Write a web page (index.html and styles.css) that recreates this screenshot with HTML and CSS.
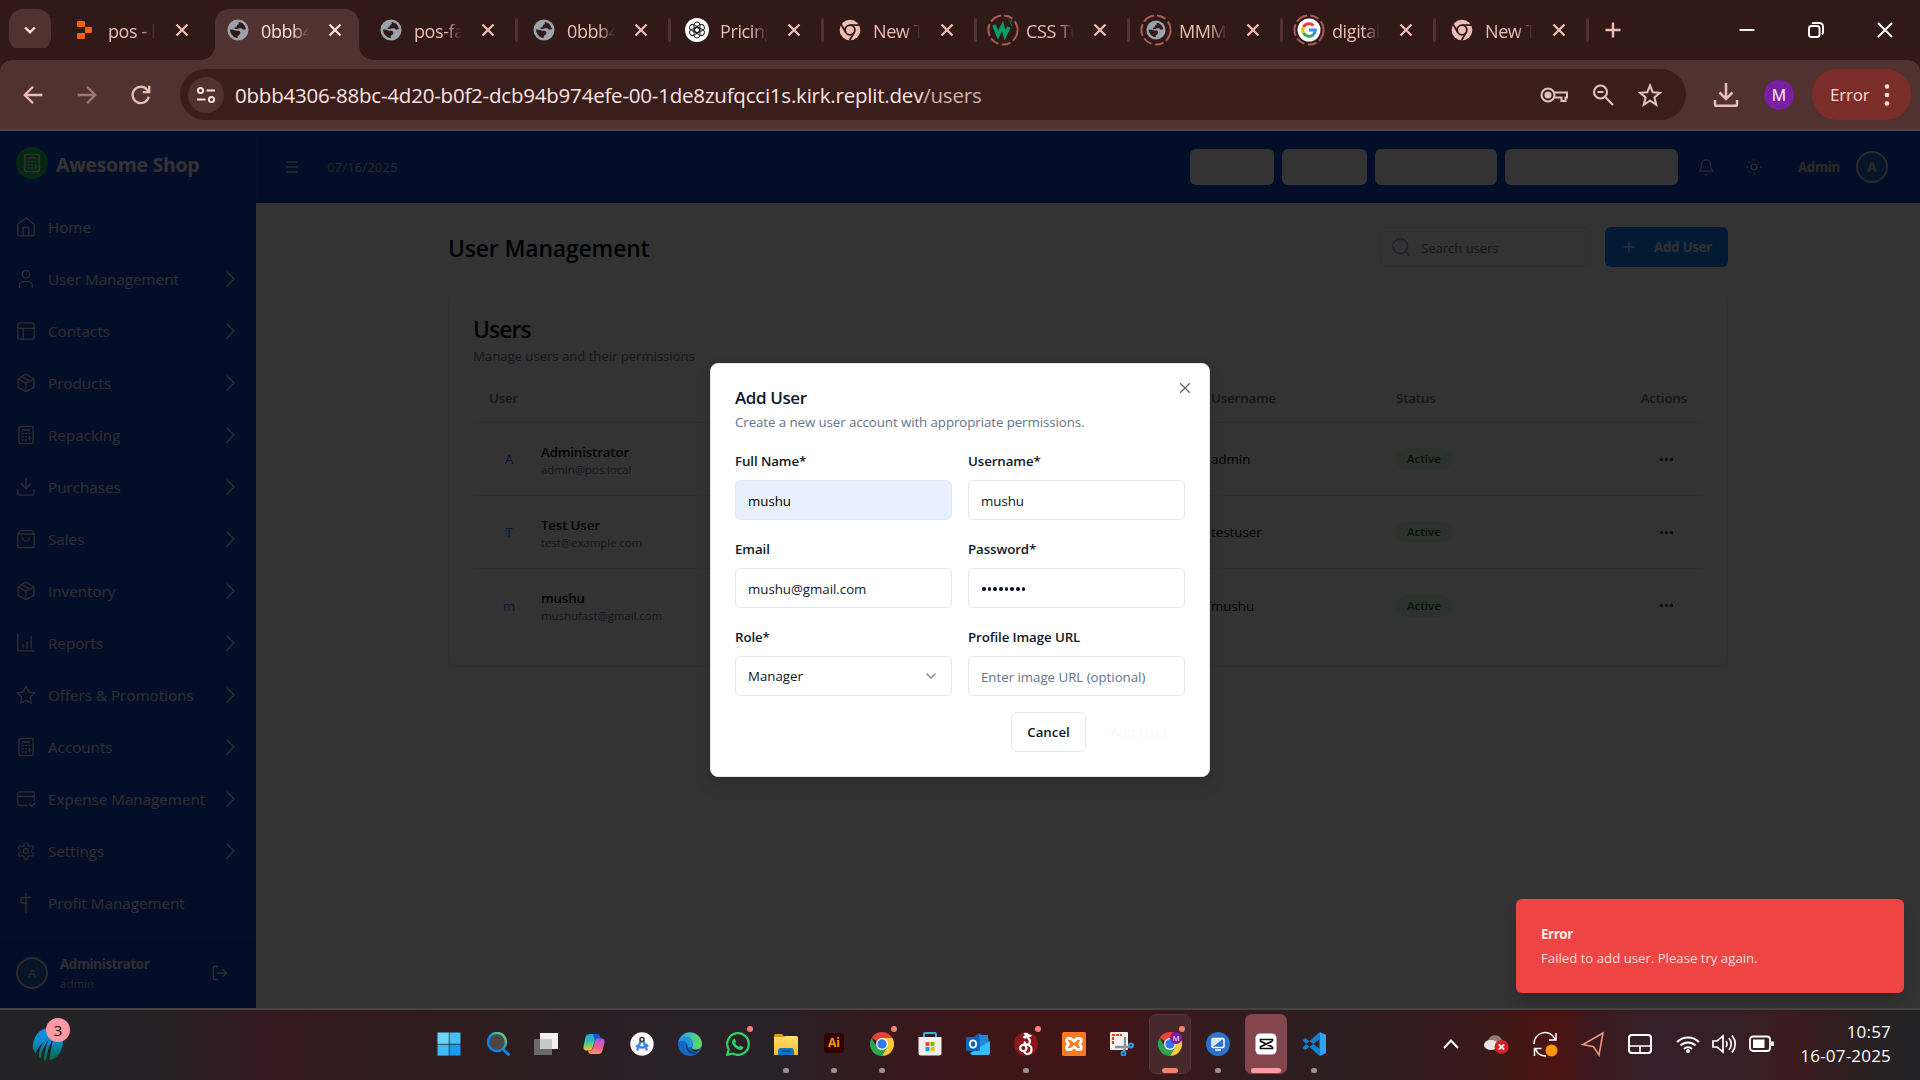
FILE: index.html
```html
<!DOCTYPE html>
<html lang="en">
<head>
<meta charset="utf-8">
<title>Awesome Shop - Users</title>
<link rel="stylesheet" href="styles.css">
</head>
<body>
<svg class="sprite" aria-hidden="true">
  <defs>
    <linearGradient id="gSearch" x1="0" y1="1" x2="1" y2="0"><stop offset="0.4" stop-color="#1180dd"/><stop offset="1" stop-color="#6fe06a"/></linearGradient>
    <linearGradient id="gEdge" x1="0" y1="0" x2="1" y2="0"><stop offset="0" stop-color="#2aa8e8"/><stop offset="1" stop-color="#62dd58"/></linearGradient>
    <linearGradient id="gCopA" x1="0" y1="0" x2="0" y2="1"><stop offset="0" stop-color="#1c9be8"/><stop offset="0.5" stop-color="#3fc4a0"/><stop offset="1" stop-color="#f6c817"/></linearGradient>
    <linearGradient id="gCopB" x1="0" y1="0" x2="0" y2="1"><stop offset="0" stop-color="#a65cf0"/><stop offset="0.55" stop-color="#f0569a"/><stop offset="1" stop-color="#ff9a55"/></linearGradient>
    <linearGradient id="gGlobe" x1="0" y1="0" x2="0" y2="1"><stop offset="0" stop-color="#1593e6"/><stop offset="0.45" stop-color="#0c86c8"/><stop offset="1" stop-color="#036b2e"/></linearGradient>
    <linearGradient id="gFolder" x1="0" y1="0" x2="0" y2="1"><stop offset="0" stop-color="#ffdf73"/><stop offset="1" stop-color="#fbbc25"/></linearGradient>
  </defs>
  <symbol id="close" viewBox="0 0 16 16"><path d="M2.500 2.500l11 11M13.500 2.500l-11 11"/></symbol>
  <symbol id="world" viewBox="0 0 24 24"><circle cx="12" cy="12" r="11.500" fill="#9aa3ab"/><path d="M12.500 3.300C17 3.500 20 7 20.700 11l-3 .8-2-1.800h-3l-1.500 1H8.500L8 9.500l2.500-1L11 6.500l2-1zM3.300 11.500l3.500.3 3.200.9h3.200l1.500 1.800-.5 2-2.500 2v2.200C7 20.500 3.500 16.500 3.300 11.500z" fill="#33191a"/></symbol>
  <symbol id="chromeMono" viewBox="0 0 24 24"><circle cx="12" cy="12" r="11.300" fill="#edbdb5"/><g fill="none" stroke="#311917" stroke-width="2"><circle cx="12" cy="12" r="5.300"/><path d="M12 6.700h10.500M7.400 14.600L2.300 5.900M16.600 14.600L11.500 23.300"/></g></symbol>
  <symbol id="chromeColor" viewBox="0 0 24 24"><path d="M12 12L1.600 6A12 12 0 0 1 22.400 6z" fill="#ea4335"/><path d="M12 6h10.400A12 12 0 0 1 12 24l5.200-9z" fill="#fcc934"/><path d="M6.800 15L1.600 6A12 12 0 0 0 12 24l5.200-9z" fill="#30a350"/><circle cx="12" cy="12" r="6" fill="#fff"/><circle cx="12" cy="12" r="4.700" fill="#2e79ee"/></symbol>
  <symbol id="spin" viewBox="0 0 32 32"><circle cx="16" cy="16" r="14.600" fill="none" stroke="#a85d56" stroke-width="2" stroke-dasharray="12 3 9 3.500 9 3 12 3"/></symbol>
  <symbol id="chev" viewBox="0 0 20 20"><path d="M7 3l7 7-7 7"/></symbol>
  <symbol id="home" viewBox="0 0 20 20"><path d="M1.800 7.200L10 1l8.200 6.200V17a1.800 1.800 0 0 1-1.800 1.800H3.600A1.800 1.800 0 0 1 1.800 17zM7.200 18.800V10.500h5.600v8.300"/></symbol>
  <symbol id="user" viewBox="0 0 20 20"><circle cx="10" cy="5.200" r="3.700"/><path d="M3.500 18.500v-1.800a4 4 0 0 1 4-4h5a4 4 0 0 1 4 4v1.800"/></symbol>
  <symbol id="layout" viewBox="0 0 20 20"><rect x="1.800" y="1.800" width="16.400" height="16.400" rx="1.800"/><path d="M1.800 7.300h16.400M7.300 18.200V7.300"/></symbol>
  <symbol id="box" viewBox="0 0 20 20"><path d="M10 1.300l7.900 4.400v8.700L10 18.800l-7.900-4.400V5.700zM2.300 5.900L10 10.200l7.700-4.300M10 10.200v8.500M6 3.600l7.800 4.500"/></symbol>
  <symbol id="calc" viewBox="0 0 20 20"><rect x="2.900" y="1.300" width="14.200" height="17.400" rx="1.800"/><path d="M6.500 5h7M13.500 11.500v3.500M6.300 8.500h.8M9.600 8.500h.8M13 8.500h.8M6.300 11.700h.8M9.600 11.700h.8M6.300 15h.8M9.600 15h.8"/></symbol>
  <symbol id="down" viewBox="0 0 20 20"><path d="M18.200 12.500v3.800a1.800 1.800 0 0 1-1.800 1.800H3.600a1.800 1.800 0 0 1-1.800-1.800v-3.800M5.500 7l4.500 4.500L14.500 7M10 11V1.300"/></symbol>
  <symbol id="bag" viewBox="0 0 20 20"><path d="M4.300 1.300L1.800 4.700v12.200a1.800 1.800 0 0 0 1.800 1.800h12.800a1.800 1.800 0 0 0 1.800-1.800V4.700l-2.500-3.400zM1.800 5h16.400M13.600 8.600a3.600 3.600 0 0 1-7.200 0"/></symbol>
  <symbol id="chart" viewBox="0 0 20 20"><path d="M1.800 1.500v16.300h16.700M7 15v-3.500M11 15V8.500M15.200 15V3.500"/></symbol>
  <symbol id="star" viewBox="0 0 20 20"><path d="M10 1.300l2.700 5.600 6.100.9-4.400 4.300 1 6.200L10 15.400l-5.400 2.900 1-6.200L1.200 7.800l6.100-.9z"/></symbol>
  <symbol id="card" viewBox="0 0 20 20"><path d="M11 16.500H3.400a1.600 1.600 0 0 1-1.600-1.600V4.500a1.600 1.600 0 0 1 1.600-1.600h13.200a1.600 1.600 0 0 1 1.600 1.600V11M1.800 7.500h16.400M13.500 15.500l2 2 3.500-3.500"/></symbol>
  <symbol id="gear" viewBox="0 0 24 24"><path d="M12.220 2h-.440a2 2 0 0 0-2 2v.180a2 2 0 0 1-1 1.730l-.430.250a2 2 0 0 1-2 0l-.150-.080a2 2 0 0 0-2.730.730l-.220.380a2 2 0 0 0 .730 2.730l.150.100a2 2 0 0 1 1 1.720v.510a2 2 0 0 1-1 1.740l-.150.090a2 2 0 0 0-.730 2.730l.220.380a2 2 0 0 0 2.730.730l.150-.080a2 2 0 0 1 2 0l.430.250a2 2 0 0 1 1 1.730V20a2 2 0 0 0 2 2h.440a2 2 0 0 0 2-2v-.180a2 2 0 0 1 1-1.730l.430-.250a2 2 0 0 1 2 0l.150.080a2 2 0 0 0 2.730-.730l.220-.390a2 2 0 0 0-.730-2.730l-.150-.080a2 2 0 0 1-1-1.740v-.500a2 2 0 0 1 1-1.740l.150-.090a2 2 0 0 0 .730-2.730l-.220-.380a2 2 0 0 0-2.730-.730l-.150.080a2 2 0 0 1-2 0l-.430-.250a2 2 0 0 1-1-1.730V4a2 2 0 0 0-2-2z"/><circle cx="12" cy="12" r="3"/></symbol>
  <symbol id="profit" viewBox="0 0 20 20"><path d="M10 .5v19M14.500 4.500H7.500a2.800 2.800 0 0 0 0 5.600h3.500"/></symbol>
  <symbol id="logout" viewBox="0 0 16 16"><path d="M5.500 14.500h-3a1.200 1.200 0 0 1-1.200-1.200V2.700a1.200 1.200 0 0 1 1.200-1.200h3M5.500 8h9M11 4.500L14.600 8 11 11.500"/></symbol>
  <symbol id="bell" viewBox="0 0 20 20"><path d="M15 7A5 5 0 0 0 5 7c0 5-2.200 7.500-2.200 7.500h14.400S15 12 15 7M8.500 18a1.700 1.700 0 0 0 3 0"/></symbol>
  <symbol id="sun" viewBox="0 0 20 20"><circle cx="10" cy="10" r="3.300"/><path d="M10 1.500v1.800M10 16.700v1.800M4 4l1.300 1.300M14.700 14.700L16 16M1.500 10h1.800M16.700 10h1.800M4 16l1.300-1.300M14.700 5.300L16 4"/></symbol>
  <symbol id="search" viewBox="0 0 20 20"><circle cx="9.200" cy="9.200" r="7.400"/><path d="M14.500 14.500l4 4"/></symbol>
</svg>

<header class="tabstrip">
  <button class="tab-search"><svg viewBox="0 0 16 16" width="16" height="16"><path d="M3.200 5.500L8 10.300l4.800-4.800"/></svg></button>
  <nav class="tabs">
    <div class="tab"><span class="fav"><svg width="24" height="24" viewBox="0 0 24 24" fill="#f8610c"><rect x="4" y="3" width="8" height="6" rx="1"/><rect x="12" y="9" width="7" height="6" rx="1"/><rect x="4" y="15" width="8" height="6" rx="1"/></svg></span><span class="title">pos - l</span><svg class="x"><use href="#close"/></svg></div>
    <div class="tab active"><span class="fav"><svg width="22" height="22"><use href="#world"/></svg></span><span class="title">0bbb4</span><svg class="x"><use href="#close"/></svg></div>
    <div class="tab"><span class="fav"><svg width="22" height="22"><use href="#world"/></svg></span><span class="title">pos-fa</span><svg class="x"><use href="#close"/></svg></div>
    <div class="tab sep"><span class="fav"><svg width="22" height="22"><use href="#world"/></svg></span><span class="title">0bbb4</span><svg class="x"><use href="#close"/></svg></div>
    <div class="tab sep"><span class="fav"><svg width="24" height="24" viewBox="0 0 24 24"><circle cx="12" cy="12" r="12" fill="#fff"/><g fill="none" stroke="#222" stroke-width="1"><rect x="9" y="4" width="6" height="10.500" rx="3"/><rect x="9" y="4" width="6" height="10.500" rx="3" transform="rotate(60 12 12)"/><rect x="9" y="4" width="6" height="10.500" rx="3" transform="rotate(120 12 12)"/><rect x="9" y="4" width="6" height="10.500" rx="3" transform="rotate(180 12 12)"/><rect x="9" y="4" width="6" height="10.500" rx="3" transform="rotate(240 12 12)"/><rect x="9" y="4" width="6" height="10.500" rx="3" transform="rotate(300 12 12)"/></g></svg></span><span class="title">Pricing</span><svg class="x"><use href="#close"/></svg></div>
    <div class="tab sep"><span class="fav"><svg width="22" height="22"><use href="#chromeMono"/></svg></span><span class="title">New T</span><svg class="x"><use href="#close"/></svg></div>
    <div class="tab sep"><span class="fav"><svg class="ring"><use href="#spin"/></svg><svg width="22" height="22" viewBox="0 0 22 22"><path d="M2 6l4 10 4.500-9 2.500 9 4-8" fill="none" stroke="#0a9c63" stroke-width="3.800"/><path d="M17 2h3l-2 2.500q2 0 1.500 2.500" fill="none" stroke="#0a7c50" stroke-width="1"/></svg></span><span class="title">CSS Tu</span><svg class="x"><use href="#close"/></svg></div>
    <div class="tab sep"><span class="fav"><svg class="ring"><use href="#spin"/></svg><svg width="20" height="20"><use href="#world"/></svg></span><span class="title">MMM</span><svg class="x"><use href="#close"/></svg></div>
    <div class="tab sep"><span class="fav"><svg class="ring"><use href="#spin"/></svg><svg width="24" height="24" viewBox="0 0 24 24"><circle cx="12" cy="12" r="11.500" fill="#fff"/><g fill="none" stroke-width="3"><path d="M16.500 7.500A6.300 6.300 0 0 0 6.500 9" stroke="#ea4335"/><path d="M6.500 9a6.500 6.500 0 0 0 0 6" stroke="#fbbc05"/><path d="M6.500 15a6.300 6.300 0 0 0 9.700 1.800" stroke="#34a853"/><path d="M16.200 16.800A6.300 6.300 0 0 0 18.300 12H12" stroke="#4285f4"/></g></svg></span><span class="title">digital</span><svg class="x"><use href="#close"/></svg></div>
    <div class="tab sep"><span class="fav"><svg width="22" height="22"><use href="#chromeMono"/></svg></span><span class="title">New T</span><svg class="x"><use href="#close"/></svg></div>
    <button class="newtab"><svg width="18" height="18" viewBox="0 0 18 18"><path d="M9 1.500v15M1.500 9h15"/></svg></button>
  </nav>
  <div class="wincontrols">
    <svg width="18" height="18" viewBox="0 0 18 18"><path d="M1.500 9h15"/></svg>
    <svg width="18" height="18" viewBox="0 0 18 18"><rect x="2" y="5" width="10.500" height="11" rx="2.500"/><path d="M5 2.600q.5-.6 2-.6h5.500A3.500 3.500 0 0 1 16 5.500V11q0 1.700-1 2.400"/></svg>
    <svg width="18" height="18" viewBox="0 0 18 18"><path d="M2 2l14 14M16 2L2 16"/></svg>
  </div>
</header>

<div class="toolbar">
  <div class="nav">
    <svg viewBox="0 0 20 20"><path d="M18.500 10H2.500M10 2.500L2.500 10l7.500 7.500"/></svg>
    <svg class="dim" viewBox="0 0 20 20"><path d="M1.500 10h16M10 2.500l7.500 7.500-7.500 7.500"/></svg>
    <svg viewBox="0 0 20 20"><path d="M17 11.500A7.400 7.400 0 1 1 15.300 5L17.500 7.200M17.500 1.500v5.900h-5.900"/></svg>
  </div>
  <div class="omnibox">
    <span class="site"><svg width="20" height="20" viewBox="0 0 20 20"><circle cx="4.500" cy="5.500" r="2.600"/><path d="M10.500 5.500H19M1 14.500h8.500"/><circle cx="15.500" cy="14.500" r="2.600"/></svg></span>
    <span class="url">0bbb4306-88bc-4d20-b0f2-dcb94b974efe-00-1de8zufqcci1s.kirk.replit.dev<span>/users</span></span>
    <div class="omni-actions">
      <svg width="28" height="20" viewBox="0 0 28 20"><circle cx="8" cy="10" r="6.500"/><circle cx="8" cy="10" r="2.500" fill="#dcc3be"/><path d="M14.200 7.500H27v5h-1.500v3.500h-4v-3.500h-7"/></svg>
      <svg width="22" height="24" viewBox="0 0 22 24"><circle cx="8.500" cy="9" r="6.500"/><path d="M13.200 14L21 22M5.500 9h6"/></svg>
      <svg width="24" height="24" viewBox="0 0 24 24"><path d="M12 2.500l2.700 6.800 7.300.5-5.600 4.700 1.800 7.200-6.200-4-6.200 4 1.800-7.200L2 9.800l7.300-.5z"/></svg>
    </div>
  </div>
  <svg class="dl" width="26" height="26" viewBox="0 0 26 26"><path d="M13 1v15M6.500 10.500L13 17l6.500-6.500M2 18v4.200a1.600 1.600 0 0 0 1.600 1.600h18.800a1.600 1.600 0 0 0 1.600-1.600V18"/></svg>
  <span class="profile">M</span>
  <button class="error-pill"><span>Error</span><svg width="6" height="24" viewBox="0 0 6 24"><circle cx="3" cy="3.500" r="2.300"/><circle cx="3" cy="12" r="2.300"/><circle cx="3" cy="20.500" r="2.300"/></svg></button>
</div>

<div class="app">
  <aside class="sidebar">
    <div class="brand"><span class="logo"><svg width="20" height="20"><use href="#calc"/></svg></span><b>Awesome Shop</b></div>
    <ul class="menu">
      <li><svg><use href="#home"/></svg><span>Home</span></li>
      <li><svg><use href="#user"/></svg><span>User Management</span><svg class="go"><use href="#chev"/></svg></li>
      <li><svg><use href="#layout"/></svg><span>Contacts</span><svg class="go"><use href="#chev"/></svg></li>
      <li><svg><use href="#box"/></svg><span>Products</span><svg class="go"><use href="#chev"/></svg></li>
      <li><svg><use href="#calc"/></svg><span>Repacking</span><svg class="go"><use href="#chev"/></svg></li>
      <li><svg><use href="#down"/></svg><span>Purchases</span><svg class="go"><use href="#chev"/></svg></li>
      <li><svg><use href="#bag"/></svg><span>Sales</span><svg class="go"><use href="#chev"/></svg></li>
      <li><svg><use href="#box"/></svg><span>Inventory</span><svg class="go"><use href="#chev"/></svg></li>
      <li><svg><use href="#chart"/></svg><span>Reports</span><svg class="go"><use href="#chev"/></svg></li>
      <li><svg><use href="#star"/></svg><span>Offers &amp; Promotions</span><svg class="go"><use href="#chev"/></svg></li>
      <li><svg><use href="#calc"/></svg><span>Accounts</span><svg class="go"><use href="#chev"/></svg></li>
      <li><svg><use href="#card"/></svg><span>Expense Management</span><svg class="go"><use href="#chev"/></svg></li>
      <li><svg><use href="#gear"/></svg><span>Settings</span><svg class="go"><use href="#chev"/></svg></li>
      <li><svg><use href="#profit"/></svg><span>Profit Management</span></li>
    </ul>
    <div class="account"><span class="avatar">A</span><div class="who"><b>Administrator</b><small>admin</small></div><svg width="16" height="16"><use href="#logout"/></svg></div>
  </aside>

  <div class="topbar">
    <svg class="burger" width="14" height="14" viewBox="0 0 14 14"><path d="M1 2h12M1 7h12M1 12h12"/></svg>
    <span class="date">07/16/2025</span>
    <div class="quick"><i class="q1"></i><i class="q2"></i><i class="q3"></i><i class="q4"></i></div>
    <svg class="bell" width="18" height="18"><use href="#bell"/></svg>
    <svg class="sun" width="18" height="18"><use href="#sun"/></svg>
    <b class="role">Admin</b>
    <span class="avatar bold">A</span>
  </div>

  <main class="content">
    <div class="page-head">
      <h1>User Management</h1>
      <div class="searchbox"><svg width="20" height="20"><use href="#search"/></svg><span>Search users</span></div>
      <button class="primary"><svg width="14" height="14" viewBox="0 0 14 14"><path d="M7 1.500v11M1.500 7h11"/></svg><span>Add User</span></button>
    </div>
    <section class="card">
      <h2>Users</h2>
      <p>Manage users and their permissions</p>
      <div class="row head"><span>User</span><span>Username</span><span>Status</span><span class="right">Actions</span></div>
      <div class="row"><div class="person"><i>A</i><div><b>Administrator</b><small>admin@pos.local</small></div></div><span>admin</span><span><em>Active</em></span><span class="dots"><u></u><u></u><u></u></span></div>
      <div class="row"><div class="person"><i>T</i><div><b>Test User</b><small>test@example.com</small></div></div><span>testuser</span><span><em>Active</em></span><span class="dots"><u></u><u></u><u></u></span></div>
      <div class="row"><div class="person"><i>m</i><div><b>mushu</b><small>mushufast@gmail.com</small></div></div><span>mushu</span><span><em>Active</em></span><span class="dots"><u></u><u></u><u></u></span></div>
    </section>
  </main>

  <div class="overlay"></div>

  <div class="dialog">
    <svg class="dismiss"><use href="#close"/></svg>
    <h3>Add User</h3>
    <p>Create a new user account with appropriate permissions.</p>
    <div class="form">
      <div class="field"><label>Full Name*</label><div class="input filled">mushu</div></div>
      <div class="field"><label>Username*</label><div class="input">mushu</div></div>
      <div class="field"><label>Email</label><div class="input">mushu@gmail.com</div></div>
      <div class="field"><label>Password*</label><div class="input password"><u></u><u></u><u></u><u></u><u></u><u></u><u></u><u></u></div></div>
      <div class="field"><label>Role*</label><div class="input select"><span>Manager</span><svg width="12" height="12" viewBox="0 0 12 12"><path d="M1.500 3.500L6 8l4.500-4.500"/></svg></div></div>
      <div class="field"><label>Profile Image URL</label><div class="input placeholder">Enter image URL (optional)</div></div>
    </div>
    <div class="buttons"><button class="cancel">Cancel</button><button class="submit">Add User</button></div>
  </div>

  <div class="toast"><b>Error</b><span>Failed to add user. Please try again.</span></div>
</div>

<footer class="taskbar">
  <div class="widget">
    <svg width="34" height="36" viewBox="0 0 34 36"><path d="M2 22C1 10 9 1 18 1c8 0 14 6 14 14 0 9-5 15-12 18q-2 1-1.500-2L22 12q-5 8-6 16-.5 5-2 6-1.500 0-1-4 1-9 4.500-17-5 6-7 14 0 6-1.500 4-2.500-3 .5-10 1-3 3-6-5 4-7 9-1 4-2 1z" fill="url(#gGlobe)"/></svg>
    <span class="count">3</span>
  </div>
  <div class="apps">
    <div class="appicon start"><svg viewBox="0 0 24 24"><rect x=".5" y=".5" width="11.300" height="11.300" fill="#6fd6fb"/><rect x="12.500" y=".5" width="11" height="11.300" fill="#45bff6"/><rect x=".5" y="12.600" width="11.300" height="11" fill="#3fb9f8"/><rect x="12.500" y="12.600" width="11" height="11" fill="#1b9bf0"/></svg></div>
    <div class="appicon"><svg viewBox="0 0 24 24" fill="none"><path d="M17.500 17.500L22.500 22.500" stroke="#157fd8" stroke-width="3" stroke-linecap="round"/><circle cx="11" cy="10" r="9" fill="#4c4644" stroke="url(#gSearch)" stroke-width="2.500"/></svg></div>
    <div class="appicon"><svg viewBox="0 0 24 24"><rect x="6" y="1" width="18" height="16" fill="#f1f1f1"/><rect x="0" y="7" width="18" height="16" fill="#6a6a6a"/><rect x="6" y="7" width="12" height="10" fill="#c8c8c8"/></svg></div>
    <div class="appicon"><svg viewBox="0 0 24 24"><path d="M7.500 2H15q2 0 2.700 2l.8 2.500h-3q-2 0-2.700 2.500L10.500 16q-.7 2.500-3 2.500H4q-3-.5-2.500-4L3.500 5Q4.500 2 7.500 2z" fill="url(#gCopA)"/><path d="M11 2h4q2 0 2.700 2l.8 2.500h-3q-2 0-2.700 2.500z" fill="#1e52d8"/><path d="M16.500 22H9q-2 0-2.600-2l-.5-1.500h2q2.300 0 3-2.500L13 9q.7-2.500 3-2.500h4q3 .5 2.500 4l-2 8q-1 3.500-4 3.500z" fill="url(#gCopB)"/></svg></div>
    <div class="appicon"><svg viewBox="0 0 24 24"><circle cx="12" cy="12" r="11.700" fill="#fafafa"/><path d="M15.500 11l3 2-3 2.500z" fill="#35a853"/><path d="M11.500 7L7 18.500M12.500 7L17 18.500M6 13.500q6 4 12 0" fill="none" stroke="#4183f2" stroke-width="2.300"/><circle cx="12" cy="7.500" r="2" fill="#fff" stroke="#333" stroke-width="1.500"/></svg></div>
    <div class="appicon"><svg viewBox="0 0 24 24"><circle cx="12" cy="12" r="12" fill="#1668be"/><path d="M.3 10A12 12 0 0 1 24 11.500c0 4-3 6-6 6s-4.500-1-4-2.300c2-2 1-6.700-4-7.200-4-.3-8 .7-9.700 2z" fill="url(#gEdge)"/><path d="M.2 9.600C2 3 14 2 15 11c0 2-1.500 3-1 4.200H10q-1-5-4-6.500-3-.8-5.800.9z" fill="#2293db"/><path d="M9 11q-3 6 3 10 4 2.500 8-.5-5 1-9-3-2-3-2-6.500z" fill="#0b3d85"/><path d="M14 15.300q-1 2.700 4.500 2.500 2.500-.3 4-1.800-1.500 3-4 3.800-5 0-5-4.500z" fill="#221f22"/></svg></div>
    <div class="appicon"><svg viewBox="0 0 24 24" fill="none"><path d="M1 23l1.700-5.500A10.800 10.800 0 1 1 6.800 21.500z" stroke="#2bd366" stroke-width="2.200" stroke-linejoin="round"/><path d="M8.500 6.500l1.800 3-1.300 1.500q1.300 2.600 4 3.900l1.500-1.300 3 1.700q-.5 2.600-3 2.600-4.500-.4-7.500-5-2.500-4.500 1.500-6.400z" fill="#2bd366"/></svg><b class="note"></b></div>
    <div class="appicon run"><svg viewBox="0 0 24 24"><path d="M0 4q0-2 2-2h6l2 2.500V10H0z" fill="#dd9b10"/><path d="M0 5h9l2-1h11.500Q24 4 24 5.500V23H0z" fill="url(#gFolder)"/><path d="M4 23v-4q0-3 3-3h10q3 0 3 3v4z" fill="#1274c4"/><path d="M7.500 19h9" stroke="#0a4a86" stroke-width="1.400"/></svg></div>
    <div class="appicon run"><svg viewBox="0 0 24 24"><rect x="2" y="1" width="20" height="20" rx="3.500" fill="#330000"/><text x="12" y="15" text-anchor="middle" font-family="Open Sans, sans-serif" font-weight="700" font-size="12" fill="#ff9a00">Ai</text></svg></div>
    <div class="appicon run"><svg viewBox="0 0 24 24"><use href="#chromeColor"/></svg><b class="note"></b></div>
    <div class="appicon"><svg viewBox="0 0 24 24"><path d="M6 6V2.500Q6 1 7.500 1h9Q18 1 18 2.500V6" fill="none" stroke="#35b4f0" stroke-width="2"/><path d="M.5 5h23v16q0 2.500-2.500 2.500H3Q.5 23.500.5 21z" fill="#f0f0f0"/><path d="M7.500 10h4v4h-4z" fill="#f25022"/><path d="M12.500 10h4v4h-4z" fill="#7fba00"/><path d="M7.500 15h4v4h-4z" fill="#00a4ef"/><path d="M12.500 15h4v4h-4z" fill="#ffb900"/></svg></div>
    <div class="appicon"><svg viewBox="0 0 24 24"><path d="M3 8L13 1l10 6v10H3z" fill="#0f5ea8"/><path d="M13 3h9v8l-9 5z" fill="#2188d8"/><path d="M4 21L24 9v12q0 2-2 2H6z" fill="#32c0f2"/><rect y="5" width="14" height="14" rx="1.500" fill="#0c66bd"/><ellipse cx="7" cy="12" rx="3.200" ry="3.600" fill="none" stroke="#fff" stroke-width="1.900"/></svg></div>
    <div class="appicon run"><svg viewBox="0 0 24 24"><circle cx="12" cy="12" r="12" fill="#8b171b"/><path d="M9.500 1.500q3-1.500 5 .5l3.500 1.500q-1 2-4 1.500-2 .5-3 2L8.500 5l2.500-1.500z" fill="#fff"/><g fill="none" stroke="#fff" stroke-width="2.200"><path d="M13 5.500q4 2 2.500 5.500-1 2-3.500 1.500-2-1-1-3M12.500 12.500q5 .5 5 5 0 4-4 4.500-3.500-.5-3-3.500"/><circle cx="9.300" cy="16" r="3.200"/></g></svg><b class="note"></b></div>
    <div class="appicon"><svg viewBox="0 0 24 24"><rect width="24" height="24" rx="1.500" fill="#f57c20"/><path d="M6.300 6.500h2.700l3 2.800 3-2.800h2.700q2 0 1.500 3l-1.700 2.500 1.700 2.500q.5 3-1.500 3H15l-3-2.800-3 2.800H6.300q-2 0-1.500-3L6.500 12 4.800 9.500q-.5-3 1.500-3z" fill="none" stroke="#fff" stroke-width="2.800" stroke-linejoin="round"/></svg></div>
    <div class="appicon"><svg viewBox="0 0 24 24"><rect x="0" y="0" width="18" height="18" rx="1" fill="#f3f3f3"/><path d="M3 12V3h9" fill="none" stroke="#dd4712" stroke-width="2.200" stroke-dasharray="3 1"/><path d="M5 15h10V5M15 15h5M15 15l-1 5" fill="none" stroke="#8c8f94" stroke-width="2.400"/><circle cx="21" cy="13.500" r="2" fill="none" stroke="#2aa0ea" stroke-width="1.800"/><circle cx="13.500" cy="21.500" r="2" fill="none" stroke="#2aa0ea" stroke-width="1.800"/></svg></div>
    <div class="appicon current"><svg viewBox="0 0 24 24"><use href="#chromeColor"/><circle cx="18" cy="6" r="6" fill="#7b1fa2"/><text x="18" y="8.700" text-anchor="middle" font-family="Open Sans, sans-serif" font-size="7.500" fill="#fff">M</text></svg><b class="note"></b></div>
    <div class="appicon run"><svg viewBox="0 0 24 24"><circle cx="12" cy="12" r="12" fill="#2c72ca"/><rect x="6" y="6.500" width="12" height="9" rx="1" fill="#2c72ca" stroke="#fff" stroke-width="1.500"/><path d="M6 15.500L17 7H6z" fill="#d5e7fb"/><path d="M9 18h6" stroke="#fff" stroke-width="1.500"/></svg></div>
    <div class="appicon pressed"><svg viewBox="0 0 24 24"><rect x="1.500" y="1.500" width="21" height="21" rx="4.500" fill="#fff"/><path d="M18.500 9V7.500H6.500v1.800l12 5.700M18.500 15v1.500H6.500v-1.800l12-5.700" fill="none" stroke="#111" stroke-width="1.700"/></svg></div>
    <div class="appicon run"><svg viewBox="0 0 24 24"><path d="M17.500 0L24 2.800v18.400L17.500 24z" fill="#2aa5f2"/><path d="M17.500 0L.5 15.500 3 18l15-11zM17.500 24L.5 8.500 3 6l15 11z" fill="#1380cf"/></svg></div>
  </div>
  <div class="tray">
    <svg width="18" height="12" viewBox="0 0 18 12"><path d="M2 10l7-7.500L16 10" stroke-width="2"/></svg>
    <svg width="26" height="22" viewBox="0 0 26 22"><path d="M6 17a5.500 5.500 0 0 1-1-10Q8 1 14 2.500q4 1 5 5 4 2 2 9z" fill="#8c7c7b" stroke="none"/><ellipse cx="8" cy="12" rx="7" ry="5" fill="#e9e5e5" stroke="none"/><circle cx="18.500" cy="14" r="7" fill="#d81f2a" stroke="none"/><path d="M15.800 11.300l5.400 5.400M21.200 11.300l-5.400 5.400" stroke-width="1.800"/></svg>
    <svg width="26" height="26" viewBox="0 0 26 26"><path d="M2 13A11 11 0 0 1 23 8M24 2v7h-7M14 25A11 11 0 0 1 3.500 18M2.500 25v-7.500h7" stroke-width="1.500"/><circle cx="19.500" cy="19.500" r="6" fill="#ff9700" stroke="none"/></svg>
    <svg width="24" height="26" viewBox="0 0 24 26"><path d="M22 2L2 13.500l10.500 2.300L18 24z" stroke="#e9967c" stroke-width="1.600"/></svg>
    <svg width="24" height="20" viewBox="0 0 24 20"><rect x="1" y="1" width="22" height="18" rx="3" stroke-width="2"/><path d="M1 12h22M12 12v7" stroke-width="1.600"/></svg>
    <div class="status">
      <svg width="24" height="20" viewBox="0 0 24 20"><path d="M1 8a15.500 15.500 0 0 1 22 0M4.500 11.500a10.600 10.600 0 0 1 15 0M8 15a5.700 5.700 0 0 1 8 0" stroke-width="2"/><circle cx="12" cy="17" r="2" fill="#fff" stroke="none"/></svg>
      <svg width="25" height="20" viewBox="0 0 25 20"><path d="M1 7v6h4l6 5V2L5 7zM14 7q2 3 0 6M17 4q4.500 6 0 12M20 1.500q6.500 8.500 0 17" stroke-width="1.700"/></svg>
      <svg width="25" height="18" viewBox="0 0 25 18"><rect x="1" y="1.500" width="20" height="14.500" rx="3" stroke-width="1.800"/><rect x="4" y="4.500" width="11.500" height="8.500" fill="#fff" stroke="none"/><path d="M23.300 6.500v4.500" stroke-width="3"/></svg>
    </div>
    <div class="clock"><span>10:57</span><span>16-07-2025</span></div>
  </div>
</footer>
</body>
</html>
```
FILE: styles.css
```css
* { box-sizing: border-box; }
body {
  margin: 0; width: 1920px; height: 1080px; overflow: hidden;
  display: flex; flex-direction: column;
  font-family: "Open Sans", "Noto Sans", sans-serif; font-size: 13.300px;
  background: #333; color: #fff;
}
h1, h2, h3, p, ul { margin: 0; padding: 0; }
button { font: inherit; color: inherit; border: 0; padding: 0; background: none; }
svg { flex: none; display: block; }
b { font-weight: 600; }
i, em { font-style: normal; }
u { text-decoration: none; }
.sprite { position: absolute; width: 0; height: 0; }

/* browser tab strip */
.tabstrip { height: 60px; display: flex; background: #311917; padding-left: 9px; }
.tab-search {
  width: 42px; height: 42px; margin: 9px 7px 0 0; border-radius: 14px; background: #503230;
  display: flex; align-items: center; justify-content: center;
}
.tab-search svg { fill: none; stroke: #fbe0dc; stroke-width: 2.400; }
.tabs { display: flex; flex: 1; }
.tab { width: 153px; height: 60px; display: flex; align-items: center; padding-left: 11px; position: relative; color: #edbdb5; }
.fav { width: 32px; height: 32px; display: flex; align-items: center; justify-content: center; position: relative; }
.ring { position: absolute; inset: 0; width: 32px; height: 32px; }
.title {
  width: 48px; margin-left: 7px; padding-top: 2px; overflow: hidden; white-space: nowrap;
  font-size: 18px; letter-spacing: -0.4px; line-height: 30px;
  -webkit-mask-image: linear-gradient(90deg, #000 65%, transparent); mask-image: linear-gradient(90deg, #000 65%, transparent);
}
.x { width: 16px; height: 16px; margin-left: 18px; stroke: #edbdb5; stroke-width: 2.300; }
.active { color: #fbe0dc; }
.active .x { stroke: #fbe0dc; }
.active .fav, .active .title, .active .x { z-index: 1; }
.active::before { content: ""; position: absolute; left: 4px; top: 9px; width: 144px; height: 51px; border-radius: 14px 14px 0 0; background: #503230; }
.active::after {
  content: ""; position: absolute; left: -10px; bottom: 0; width: 172px; height: 14px;
  background: radial-gradient(circle at 0 0, transparent 13.500px, #503230 14px) left / 14px 14px no-repeat,
    radial-gradient(circle at 100% 0, transparent 13.500px, #503230 14px) right / 14px 14px no-repeat;
}
.sep::before, .newtab::before { content: ""; position: absolute; left: -2px; top: 18px; width: 3px; height: 24px; border-radius: 2px; background: #503230; }
.newtab { width: 50px; display: flex; align-items: center; justify-content: center; position: relative; }
.newtab svg { stroke: #edbdb5; stroke-width: 2.400; }
.wincontrols { display: flex; gap: 51px; align-items: center; padding-right: 26px; fill: none; stroke: #fff; stroke-width: 1.900; }

/* browser toolbar */
.toolbar { height: 71px; display: flex; align-items: center; background: #503230; border-bottom: 2px solid #574341; padding: 0 9px 0 22px; border-radius: 12px 12px 0 0; box-shadow: 0 -12px 0 0 #311917; }
.nav { display: flex; gap: 32px; margin-right: 28px; }
.nav svg { width: 22px; height: 22px; fill: none; stroke: #edbdb5; stroke-width: 2.100; }
.nav .dim { opacity: .5; }
.omnibox { width: 1506px; height: 51px; border-radius: 26px; background: #3a1e1c; display: flex; align-items: center; padding: 0 24px 0 8px; }
.site { width: 36px; height: 36px; border-radius: 50%; background: #503230; display: flex; align-items: center; justify-content: center; }
.site svg { fill: none; stroke: #fbe0dc; stroke-width: 2; }
.url { flex: 1; margin-left: 11px; font-size: 20.500px; letter-spacing: -0.210px; color: #fbe3e0; white-space: nowrap; }
.url span { color: #cdb3af; }
.omni-actions { display: flex; align-items: center; gap: 24px; fill: none; stroke: #dcc3be; stroke-width: 2.100; }
.dl { margin-left: 27px; fill: none; stroke: #edbdb5; stroke-width: 2.500; }
.profile { width: 30px; height: 30px; margin-left: 25px; border-radius: 50%; background: #7b1fa2; font-size: 16px; display: flex; align-items: center; justify-content: center; }
.error-pill { width: 99px; height: 51px; margin-left: auto; border-radius: 25px; background: #7b2d29; color: #ffdad5; display: flex; align-items: center; padding: 0 21px 0 18px; justify-content: space-between; font-size: 17px; letter-spacing: -0.2px; }
.error-pill svg { fill: #ffdad5; }

/* application shell */
.app { position: relative; height: 877px; display: grid; grid-template: 72px 1fr / 256px 1fr; background: #fff; }
.sidebar { grid-row: 1 / 3; background: #1a46c6; color: #e5e7eb; display: flex; flex-direction: column; }
.brand { height: 64px; display: flex; align-items: center; gap: 8px; padding-left: 16px; font-size: 19.400px; color: #fff; }
.brand b { font-weight: 700; letter-spacing: -0.250px; padding-top: 2px; }
.logo { width: 32px; height: 32px; border-radius: 50%; background: #22c55e; display: flex; align-items: center; justify-content: center; }
.logo svg, .menu svg, .account svg { fill: none; stroke: currentColor; stroke-width: 1.300; stroke-linecap: round; stroke-linejoin: round; }
.menu { list-style: none; padding: 6px 16px 0; flex: 1; font-size: 15.200px; }
.menu li { height: 52px; display: flex; align-items: center; }
.menu svg { width: 20px; height: 20px; }
.menu span { flex: 1; margin-left: 12px; }
.menu .go { stroke-width: 1.500; }
.account { height: 72px; border-top: 1px solid #1c56cc; display: flex; align-items: center; padding: 0 28px 0 16px; }
.avatar { width: 32px; height: 32px; border-radius: 50%; border: 2px solid #d5d5d5; background: #2a63c6; color: #d5d5d5; display: flex; align-items: center; justify-content: center; font-size: 13.500px; }
.avatar.bold { font-weight: 700; }
.who { flex: 1; margin-left: 12px; padding-top: 3px; display: flex; flex-direction: column; line-height: 19px; }
.who b { font-weight: 700; letter-spacing: -0.350px; }
.who small { font-size: 11.500px; color: #bcbcbc; }
.topbar { background: #1a46c6; display: flex; align-items: center; padding: 0 32px 0 28px; color: #d5d5d5; fill: none; stroke: #d5d5d5; stroke-width: 1.400; border-left: 1px solid #1c56cc; }
.date { margin-left: 28px; color: #bcbcbc; }
.quick { display: flex; gap: 8px; margin-left: auto; }
.quick i { height: 36px; border-radius: 6px; background: #fff; }
.q1 { width: 84px; } .q2 { width: 85px; } .q3 { width: 122px; } .q4 { width: 173px; }
.bell { margin-left: 19px; }
.sun { margin-left: 30px; }
.role { width: 43px; margin: 0 15px 0 35px; font-weight: 700; letter-spacing: -0.300px; }

.content { padding: 24px 192px 0; color: #020817; }
.page-head { display: flex; align-items: center; height: 40px; }
h1 { flex: 1; font-size: 22.800px; line-height: 32px; font-weight: 600; letter-spacing: -0.1px; padding-top: 4px; }
.searchbox { width: 212px; height: 40px; border: 1px solid #e6eaf0; border-radius: 6px; display: flex; align-items: center; gap: 10px; padding-left: 10px; color: #64748b; }
.searchbox span { padding-top: 1px; letter-spacing: -0.150px; }
.searchbox svg { fill: none; stroke: #94a3b8; stroke-width: 1.600; }
.primary { width: 123px; height: 40px; margin-left: 13px; border-radius: 6px; background: #0a84ff; color: #f0f4f9; font-weight: 700; display: flex; align-items: center; padding-left: 17px; gap: 18px; }
.primary svg { stroke: #f0f4f9; stroke-width: 1.500; }
.primary span { letter-spacing: -0.250px; white-space: nowrap; }
.card { height: 375px; margin-top: 24px; border: 1px solid #e9edf2; border-radius: 8px; padding: 24px; box-shadow: 0 1px 2px #0001; }
h2 { font-size: 22.800px; line-height: 28px; padding-bottom: 2px; font-weight: 600; letter-spacing: -0.900px; }
.card p { line-height: 20px; color: #64748b; letter-spacing: -0.100px; }
.row { height: 73px; display: grid; grid-template-columns: 722px 185px 1fr 80px; align-items: center; padding: 0 16px; border-bottom: 1px solid #e2e8f0; }
.row:last-child { border-bottom: 0; }
.row.head { height: 49px; margin-top: 8px; color: #64748b; font-weight: 600; letter-spacing: -0.150px; }
.row .right { text-align: right; }
.person { display: flex; align-items: center; }
.person i { width: 40px; text-align: center; color: #0a84ff; }
.person > div { margin-left: 12px; padding-top: 3px; display: flex; flex-direction: column; line-height: 18px; }
.person b { letter-spacing: -0.150px; }
.person small { font-size: 11.500px; color: #64748b; letter-spacing: -0.080px; }
.row em { display: inline-block; height: 22px; padding: 0 11px; border-radius: 11px; background: #dcfce7; color: #166534; font-size: 11.500px; line-height: 22px; font-weight: 600; }
.dots { display: flex; justify-content: flex-end; gap: 2px; padding-right: 14px; }
.dots u { width: 3px; height: 3px; border-radius: 50%; background: #020817; }

.overlay { position: absolute; inset: 0; background: rgba(0, 0, 0, .8); }
.dialog { position: absolute; left: 710px; top: 232px; width: 500px; height: 414px; padding: 24px; border: 1px solid #e2e8f0; border-radius: 8px; background: #fff; color: #0f172a; box-shadow: 0 8px 16px #0002; }
.dismiss { position: absolute; right: 17px; top: 17px; width: 14px; height: 14px; stroke: #5c6270; stroke-width: 1.500; }
h3 { font-size: 17px; line-height: 18px; padding-top: 1px; font-weight: 600; letter-spacing: -0.400px; }
.dialog p { margin-top: 5px; line-height: 20px; color: #64748b; letter-spacing: -0.080px; }
.form { display: grid; grid-template-columns: 1fr 1fr; gap: 16px; margin-top: 16px; }
.field { height: 72px; display: flex; flex-direction: column; justify-content: space-between; }
.field label { font-weight: 600; line-height: 24px; letter-spacing: -0.1px; padding-top: 1px; }
.input { height: 40px; border: 1px solid #e2e8f0; border-radius: 6px; padding: 2px 12px 0; display: flex; align-items: center; flex: none; letter-spacing: -0.030px; }
.input.filled { background: #e8f0fe; color: #000; }
.input.password { gap: 2.200px; padding-left: 13px; }
.password u { width: 3.500px; height: 3.500px; border-radius: 50%; background: #0f172a; }
.input.select { padding-top: 0; padding-right: 14px; justify-content: space-between; }
.select svg { fill: none; stroke: #7f8590; stroke-width: 1.300; }
.input.placeholder { color: #64748b; }
.buttons { display: flex; justify-content: flex-end; gap: 8px; margin-top: 16px; font-weight: 600; }
.cancel { width: 75px; height: 40px; border: 1px solid #e2e8f0; border-radius: 6px; }
.submit { width: 91px; height: 40px; color: #f8fafc; }
.toast { position: absolute; left: 1516px; top: 768px; width: 388px; height: 94px; padding: 25px; border-radius: 6px; background: #ef4444; box-shadow: 0 10px 15px -3px #0003; color: #fdeaea; display: flex; flex-direction: column; gap: 4px; line-height: 20px; }
.toast span { color: #fcdcdc; letter-spacing: -0.050px; }
.toast b { font-weight: 700; letter-spacing: -0.400px; }

/* desktop taskbar */
.taskbar {
  height: 72px; border-top: 2px solid #474241; display: flex; align-items: stretch; position: relative;
  background: linear-gradient(90deg, #232325 0, #242224 150px, #351a23 262px, #331b1b 330px, #2e1c1d 420px, #2a2026 640px, #2a2128 780px, #341a1d 880px, #401517 990px, #401517 1120px, #321b1e 1220px, #2c1f23 1340px, #351b1d 1430px, #3b1918 1490px, #4c1313 1555px, #3a1a20 1600px, #371f29 1650px, #371f27 1740px, #3b1b1d 1800px, #252223 1880px, #232325 1920px);
}
.widget { width: 426px; padding: 17px 0 0 31px; position: relative; }
.count { position: absolute; left: 46px; top: 8px; width: 24px; height: 24px; border-radius: 50%; background: #ff99a4; color: #111; font-size: 15px; line-height: 24px; text-align: center; }
.apps { display: flex; }
.appicon { width: 42px; height: 60px; margin: 4px 3px 0; display: flex; align-items: center; justify-content: center; position: relative; border-radius: 7px; }
.appicon svg { width: 24px; height: 24px; }
.start { padding-right: 3px; }
.run::after { content: ""; position: absolute; left: 18px; top: 54px; width: 6px; height: 5px; border-radius: 3px; background: #9c9494; }
.note { position: absolute; left: 30px; top: 12px; width: 6px; height: 6px; border-radius: 50%; background: #f4816b; }
.current { background: #47292c; border: 1px solid #513538; }
.current::after { content: ""; position: absolute; left: 12px; top: 53px; width: 16px; height: 5px; border-radius: 3px; background: #f4816b; }
.current .note { left: 29px; top: 11px; }
.pressed { background: #83464c; }
.pressed::after { content: ""; position: absolute; left: 6px; top: 54px; width: 30px; height: 5px; border-radius: 3px; background: #ff99a4; }
.tray { flex: 1; display: flex; align-items: center; justify-content: flex-end; padding: 0 29px 2px 0; fill: none; stroke: #fff; gap: 23px; }
.status { display: flex; gap: 12px; align-items: center; margin-left: 1px; }
.clock { width: 94px; margin-left: 0; display: flex; flex-direction: column; align-items: flex-end; font-size: 17px; line-height: 24px; letter-spacing: 0.200px; white-space: nowrap; }
```
